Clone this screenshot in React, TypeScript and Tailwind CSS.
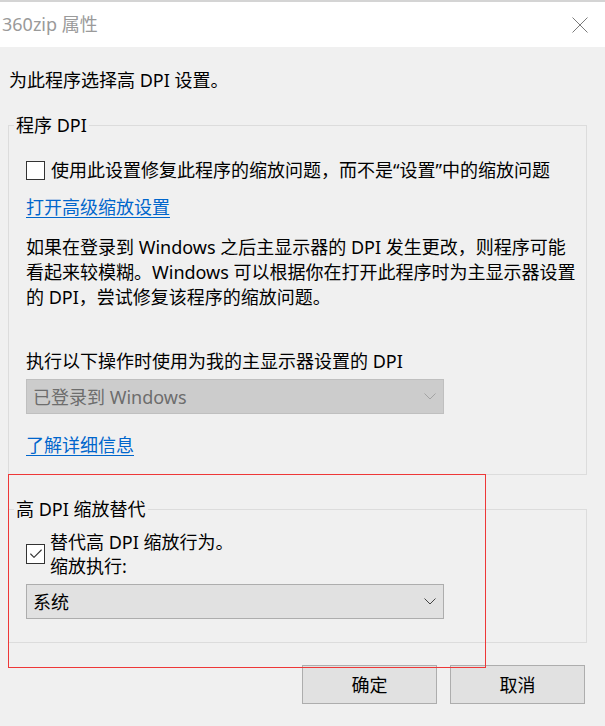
import { Check } from 'lucide-react'

const font = { fontFamily: '"Noto Sans", "Noto Sans CJK SC", sans-serif' }

function Chevron({ color }: { color: string }) {
  return (
    <svg width="12" height="7" viewBox="0 0 12 7" fill="none">
      <polyline points="0.5,0.5 6,6 11.5,0.5" stroke={color} strokeWidth="1" />
    </svg>
  )
}

function Select({ value, disabled }: { value: string; disabled?: boolean }) {
  return (
    <div
      className={`w-[418px] h-[35px] flex items-center justify-between pl-[6px] pr-[7px] border ${
        disabled ? 'bg-[#cccccc] border-[#bfbfbf] text-[#6d6d6d]' : 'bg-[#e1e1e1] border-[#adadad] text-black'
      }`}
    >
      <span className="leading-[24px]">{value}</span>
      <Chevron color={disabled ? '#a3a3a3' : '#444444'} />
    </div>
  )
}

export default function App() {
  return (
    <div style={font} className="relative w-[605px] h-[726px] bg-[#f0f0f0] text-[18px] text-black overflow-hidden">
      {/* Title bar */}
      <div className="h-[47px] bg-white border-t-2 border-[#d4d4d4] flex items-center justify-between pl-[2px] pr-[17px]">
        <span className="leading-[24px] text-[#9a9a9a] -mt-[2px]">360zip 属性</span>
        <svg width="16" height="16" viewBox="0 0 16 16">
          <line x1="0.5" y1="0.5" x2="15.5" y2="15.5" stroke="#7a7a7a" strokeWidth="1" />
          <line x1="15.5" y1="0.5" x2="0.5" y2="15.5" stroke="#7a7a7a" strokeWidth="1" />
        </svg>
      </div>

      <p className="mt-[21px] ml-[9px] leading-[24px]">为此程序选择高 DPI 设置。</p>

      {/* 程序 DPI */}
      <fieldset className="mt-[21px] ml-[8px] w-[579px] border border-[#dcdcdc] pl-[17px] pb-[17px]">
        <legend className="ml-[-12px] px-[2px] leading-[24px]">程序 DPI</legend>
        <div className="mt-[21px] flex items-center gap-[6px] leading-[24px]">
          <span className="w-[19px] h-[19px] bg-white border border-[#333333]" />
          <span className="whitespace-nowrap">使用此设置修复此程序的缩放问题，而不是“设置”中的缩放问题</span>
        </div>
        <a className="block w-fit mt-[13px] leading-[24px] text-[#0066cc] underline underline-offset-[3px]">打开高级缩放设置</a>
        <p className="mt-[16px] leading-[25px] whitespace-nowrap">
          如果在登录到 Windows 之后主显示器的 DPI 发生更改，则程序可能
          <br />
          看起来较模糊。Windows 可以根据你在打开此程序时为主显示器设置
          <br />
          的 DPI，尝试修复该程序的缩放问题。
        </p>
        <p className="mt-[39px] leading-[24px]">执行以下操作时使用为我的主显示器设置的 DPI</p>
        <div className="mt-[6px]">
          <Select value="已登录到 Windows" disabled />
        </div>
        <a className="block w-fit mt-[19px] leading-[24px] text-[#0066cc] underline underline-offset-[3px]">了解详细信息</a>
      </fieldset>

      {/* 高 DPI 缩放替代 */}
      <fieldset className="mt-[22px] ml-[8px] w-[579px] border border-[#dcdcdc] pl-[17px] pb-[23px]">
        <legend className="ml-[-12px] px-[2px] leading-[24px]">高 DPI 缩放替代</legend>
        <div className="mt-[9px] flex items-center gap-[5px]">
          <span className="w-[19px] h-[20px] bg-white border border-[#333333] flex items-center justify-center">
            <Check className="w-[16px] h-[16px] text-[#333333]" strokeWidth={1.6} />
          </span>
          <div className="leading-[24px]">
            <p>替代高 DPI 缩放行为。</p>
            <p>缩放执行:</p>
          </div>
        </div>
        <div className="mt-[6px]">
          <Select value="系统" />
        </div>
      </fieldset>

      {/* Buttons */}
      <div className="mt-[22px] pr-[20px] flex justify-end gap-[13px]">
        <button className="w-[135px] h-[39px] bg-[#e1e1e1] border border-[#adadad] leading-[24px]">确定</button>
        <button className="w-[135px] h-[39px] bg-[#e1e1e1] border border-[#adadad] leading-[24px]">取消</button>
      </div>

      {/* Red annotation box */}
      <div className="absolute left-[8px] top-[474px] w-[478px] h-[194px] border border-[#ee3838] pointer-events-none" />
    </div>
  )
}
